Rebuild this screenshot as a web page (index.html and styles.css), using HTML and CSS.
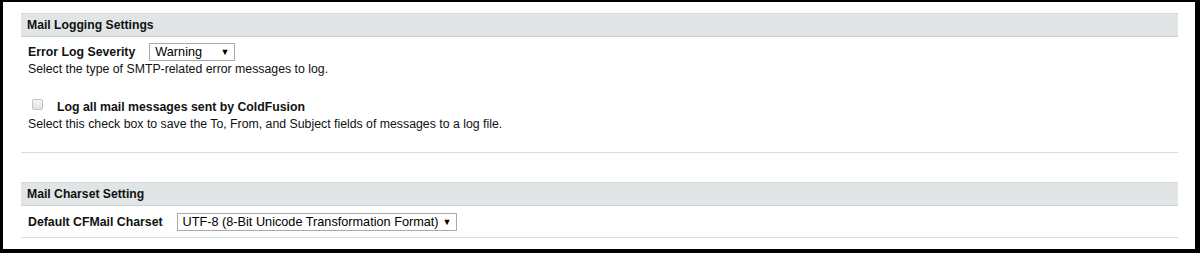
FILE: index.html
```html
<!DOCTYPE html>
<html>
<head>
<meta charset="utf-8">
<link rel="stylesheet" href="styles.css">
</head>
<body>
<div class="frame">
  <div class="section">
    <div class="head">Mail Logging Settings</div>
    <div class="body">
      <div class="row">
        <span class="label">Error Log Severity</span>
        <span class="select sel-sev"><span class="val">Warning</span><span class="arrow">▼</span></span>
      </div>
      <div class="desc">Select the type of SMTP-related error messages to log.</div>
      <div class="row check-row">
        <span class="checkbox"></span>
        <span class="label">Log all mail messages sent by ColdFusion</span>
      </div>
      <div class="desc">Select this check box to save the To, From, and Subject fields of messages to a log file.</div>
    </div>
  </div>
  <div class="section second">
    <div class="head">Mail Charset Setting</div>
    <div class="body body2">
      <div class="row">
        <span class="label">Default CFMail Charset</span>
        <span class="select sel-cs"><span class="val">UTF-8 (8-Bit Unicode Transformation Format)</span><span class="arrow">▼</span></span>
      </div>
    </div>
  </div>
</div>
</body>
</html>
```
FILE: styles.css
```css
html, body { margin: 0; padding: 0; }
body {
  background: #000;
  font-family: "Liberation Sans", Arial, sans-serif;
  font-size: 12.3px;
  color: #111;
  height: 253px;
  overflow: hidden;
}
.frame {
  margin: 2px 5px 0 3px;
  height: 247px;
  background: #fff;
  padding: 11px 17px 0 18px;
  box-sizing: border-box;
}
.head {
  background: #e1e5e5;
  border-top: 1px solid #cfdcdc;
  border-bottom: 1px solid #c6d4d5;
  height: 22px;
  line-height: 22px;
  padding-left: 6px;
  font-weight: bold;
  font-size: 12.2px;
}
.body {
  padding: 6px 0 0 7px;
  height: 109px;
  border-bottom: 1px solid #d6dfe0;
}
.row {
  display: flex;
  align-items: center;
  height: 18px;
}
.label { font-weight: bold; white-space: nowrap; }
.select {
  display: inline-flex;
  align-items: center;
  justify-content: space-between;
  border: 1px solid #a9a9a9;
  box-sizing: border-box;
  height: 18px;
  padding: 0 5px 0 5px;
  background: #fff;
  white-space: nowrap;
  color: #000;
  font-size: 12.7px;
}
.sel-sev { margin-left: 14px; width: 86px; }
.sel-cs { margin-left: 14px; width: 280px; }
.arrow { font-size: 9px; margin-left: 4px; }
.desc { line-height: 16px; }
.check-row { margin-top: 20px; height: 19px; }
.checkbox {
  width: 11px; height: 11px;
  box-sizing: border-box;
  border: 1px solid #c4c4c4;
  border-radius: 2px;
  background: linear-gradient(#f6f6f6, #e2e2e2);
  margin: 0 14px 0 4px;
  position: relative; top: -2px;
}
.second { margin-top: 29px; }
.body2 { height: 32px; padding-top: 7px; box-sizing: border-box; }
```
